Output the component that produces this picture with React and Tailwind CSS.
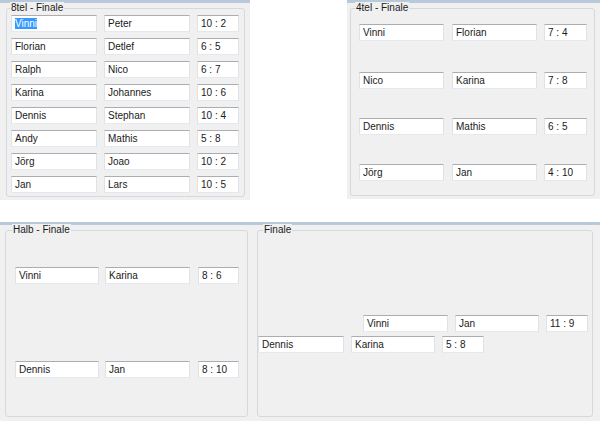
import React from "react"

const tb =
  "h-[17px] bg-white border border-t-[#abadb3] border-x-[#dfe3e8] border-b-[#e3e9ef] pl-[3px] leading-[15px] whitespace-nowrap overflow-hidden"

const GroupBox = ({ label, labelPos, className, children }) => (
  <div className={`relative border border-[#d5d9dd] rounded-[3px] ${className}`}>
    <span className={`absolute -top-[7px] ${labelPos} px-[1px] bg-[#f0f0f0] leading-[12px]`}>
      {label}
    </span>
    {children}
  </div>
)

const Row = ({ a, b, s, widths, gaps, className = "", selected }) => (
  <div className={`flex ${gaps} ${className}`}>
    <div className={`${tb} ${widths[0]}`}>
      {selected ? <span className="bg-[#3399ff] text-white">{a}</span> : a}
    </div>
    <div className={`${tb} ${widths[1]}`}>{b}</div>
    <div className={`${tb} ${widths[2]}`}>{s}</div>
  </div>
)

const eighth = [
  ["Vinni", "Peter", "10 : 2"],
  ["Florian", "Detlef", "6 : 5"],
  ["Ralph", "Nico", "6 : 7"],
  ["Karina", "Johannes", "10 : 6"],
  ["Dennis", "Stephan", "10 : 4"],
  ["Andy", "Mathis", "5 : 8"],
  ["Jörg", "Joao", "10 : 2"],
  ["Jan", "Lars", "10 : 5"],
]

const quarter = [
  ["Vinni", "Florian", "7 : 4", "mt-0"],
  ["Nico", "Karina", "7 : 8", "mt-[31px]"],
  ["Dennis", "Mathis", "6 : 5", "mt-[29px]"],
  ["Jörg", "Jan", "4 : 10", "mt-[29px]"],
]

export default function App() {
  return (
    <div className="w-[600px] h-[421px] bg-white overflow-hidden font-['Liberation_Sans',Arial,sans-serif] text-[10px] text-[#1a1a1a]">
      {/* top row */}
      <div className="flex h-[200px]">
        <div className="w-[250px] h-[200px] bg-[#f0f0f0] border-t-[3px] border-t-[#b9c9dc] pt-[5px] pl-[6px] pr-[5px] pb-[3px]">
          <GroupBox label="8tel - Finale" labelPos="left-[3px]" className="h-full">
            <div className="flex flex-col gap-[6px] pt-[6px] pl-[4px]">
              {eighth.map((r, i) => (
                <Row
                  key={i}
                  a={r[0]}
                  b={r[1]}
                  s={r[2]}
                  selected={i === 0}
                  widths={["w-[86px]", "w-[86px]", "w-[42px]"]}
                  gaps="gap-[7px]"
                />
              ))}
            </div>
          </GroupBox>
        </div>

        <div className="ml-[97px] w-[253px] h-[199px] bg-[#f0f0f0] border-t-[3px] border-t-[#b9c9dc] pt-[5px] pl-[3px] pr-[5px] pb-[3px]">
          <GroupBox label="4tel - Finale" labelPos="left-[4px]" className="h-full">
            <div className="flex flex-col pt-[15px] pl-[8px]">
              {quarter.map((r, i) => (
                <Row
                  key={i}
                  a={r[0]}
                  b={r[1]}
                  s={r[2]}
                  className={r[3]}
                  widths={["w-[85px] mr-[8px]", "w-[85px] mr-[7px]", "w-[43px]"]}
                  gaps=""
                />
              ))}
            </div>
          </GroupBox>
        </div>
      </div>

      {/* bottom panel */}
      <div className="mt-[22px] h-[199px] bg-[#f0f0f0] border-t-[3px] border-t-[#b9c9dc] pt-[5px] pl-[5px] pb-[4px] flex gap-[9px]">
        <GroupBox label="Halb - Finale" labelPos="left-[6px]" className="w-[243px] h-full">
          <div className="flex flex-col pt-[36px] pl-[9px]">
            <Row
              a="Vinni"
              b="Karina"
              s="8 : 6"
              widths={["w-[84px] mr-[6px]", "w-[85px] mr-[8px]", "w-[41px]"]}
              gaps=""
            />
            <Row
              a="Dennis"
              b="Jan"
              s="8 : 10"
              className="mt-[77px]"
              widths={["w-[84px] mr-[6px]", "w-[85px] mr-[8px]", "w-[41px]"]}
              gaps=""
            />
          </div>
        </GroupBox>

        <GroupBox label="Finale" labelPos="left-[5px]" className="w-[336px] h-full">
          <div className="flex flex-col pt-[84px]">
            <Row
              a="Vinni"
              b="Jan"
              s="11 : 9"
              className="ml-[105px]"
              widths={["w-[85px]", "w-[84px]", "w-[42px]"]}
              gaps="gap-[7px]"
            />
            <Row
              a="Dennis"
              b="Karina"
              s="5 : 8"
              className="mt-[4px]"
              widths={["w-[86px]", "w-[84px]", "w-[42px]"]}
              gaps="gap-[7px]"
            />
          </div>
        </GroupBox>
      </div>
    </div>
  )
}
